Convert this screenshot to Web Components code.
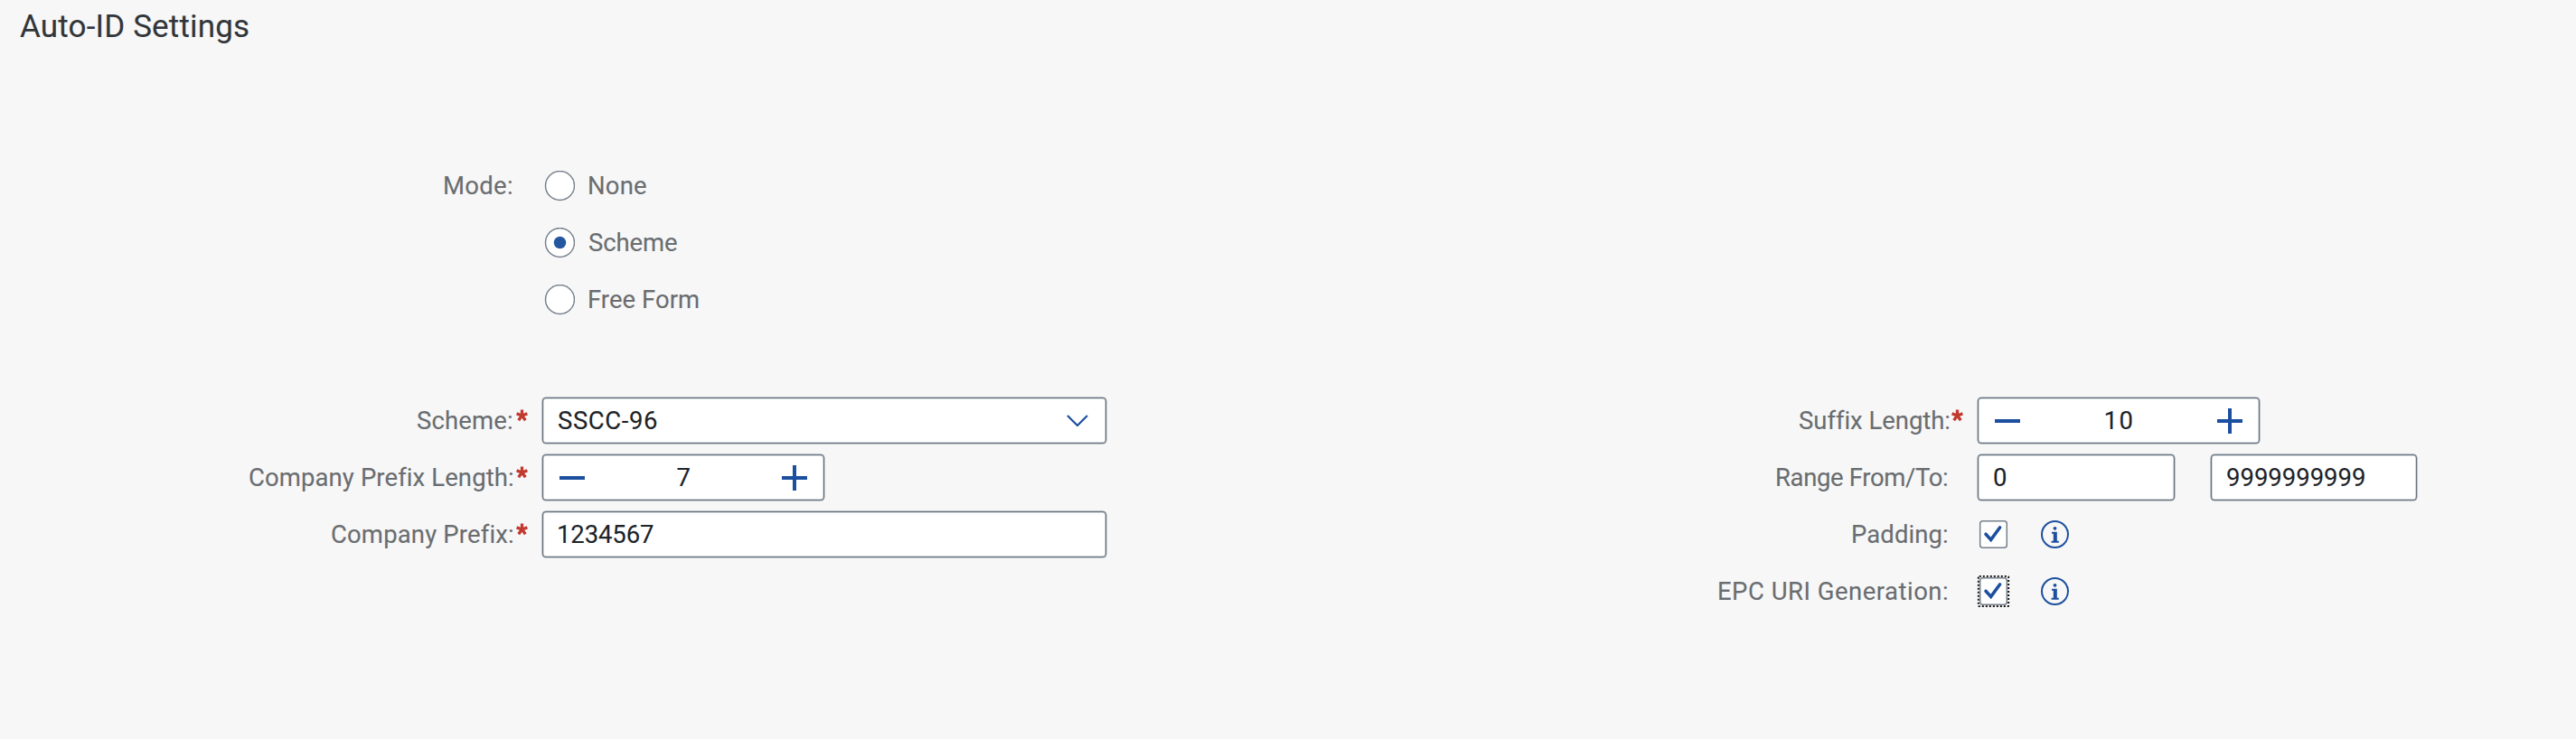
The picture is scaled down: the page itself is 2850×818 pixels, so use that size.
<!DOCTYPE html>
<html lang="en">
<head>
<meta charset="utf-8">
<title>Auto-ID Settings</title>
<style>
html,body{margin:0;height:100%;background:#f7f7f7;overflow:hidden}
body{font:27px/36px Roboto,"Liberation Sans",sans-serif;color:#6a6d70}
</style>
</head>
<body>
<autoid-settings></autoid-settings>
<script>
const ctx = document.createElement('canvas').getContext('2d');

/* Text run whose box is exactly its ink width, tracked to the given measure. */
class FitText extends HTMLElement {
  connectedCallback() {
    const root = this.attachShadow({mode: 'open'});
    const t = this.textContent, size = this.getAttribute('size') || 27.5, w = +this.getAttribute('w');
    ctx.font = size + 'px Roboto, "Liberation Sans", sans-serif';
    const m = ctx.measureText(t);
    const ink = m.actualBoundingBoxLeft + m.actualBoundingBoxRight;
    const ls = t.length > 1 ? (w - ink) / (t.length - 1) : 0;
    root.innerHTML = `<style>:host{display:block;flex:none;white-space:nowrap;width:${w}px;font-size:${size}px;letter-spacing:${ls}px;text-indent:${m.actualBoundingBoxLeft}px;-webkit-text-stroke:.1px currentColor}</style><slot></slot>`;
  }
}
customElements.define('fit-text', FitText);

function define(name, html) {
  customElements.define(name, class extends HTMLElement {
    connectedCallback() {
      if (this.shadowRoot) return;
      const t = document.createElement('template');
      t.innerHTML = html;
      this.attachShadow({mode: 'open'}).append(t.content.cloneNode(true));
    }
  });
}

define('form-row', `<style>
:host{display:grid;grid-template-columns:var(--label) 34px auto;height:63px;align-items:center;justify-content:start}
.label{display:flex;justify-content:flex-end}
.star{display:block;width:13px;height:14px;margin:-12px 0 0 5px;visibility:hidden}
:host([required]) .star{visibility:visible}
.field{display:flex;align-items:center}
</style>
<div class="label"><slot name="label"></slot></div>
<svg class="star" viewBox="0 0 13 14"><path d="M6.5 7V.5M6.5 7L.6 4.9M6.5 7l5.9-2.1M6.5 7l-3.8 5.3M6.5 7l3.8 5.3" stroke="#c1392f" stroke-width="3.3" fill="none"/></svg>
<div class="field"><slot></slot></div>`);

define('text-box', `<style>
:host{display:flex;flex:none;align-items:center;box-sizing:border-box;height:51px;border:1px solid #68737f;border-radius:4px;box-shadow:0 0 0 .5px #8a939d,inset 0 0 0 .5px #a8afb7;background:#fff;color:#1d2329;padding:0 17px;justify-content:space-between;width:var(--w,624px)}
</style><slot></slot>`);

define('radio-option', `<style>
:host{display:flex;align-items:center;gap:16px;padding-left:2px}
svg{display:block;width:34px;height:34px}
.dot{display:none}:host([checked]) .dot{display:block}
</style>
<svg viewBox="0 0 34 34"><circle cx="17.5" cy="16.5" r="16" fill="#fff" stroke="#77808b" stroke-width="1.5"/><circle class="dot" cx="17.5" cy="16.5" r="6.8" fill="#2457a0"/></svg><slot></slot>`);

define('step-input', `<style>
:host{display:block}
text-box{--w:312px}
svg{width:28px;height:28px;display:block}
path{stroke:#1c4f9f;stroke-width:4;fill:none}
</style>
<text-box><svg viewBox="0 0 28 28" style="margin-left:1px"><path d="M0 14h28"/></svg><slot></slot><svg viewBox="0 0 28 28" style="margin-right:1px"><path d="M0 14h28M14 0v28"/></svg></text-box>`);

define('check-box', `<style>
:host{display:block;margin-left:2px}
svg{display:block;width:31px;height:31px;overflow:visible}
.focus{display:none}:host([focused]) .focus{display:block}
</style>
<svg viewBox="0 0 31 31"><rect class="focus" x="-1.2" y="-1.2" width="33.4" height="33.4" rx="1" fill="none" stroke="#000" stroke-width="1.8" stroke-dasharray="2 2"/><rect x=".7" y=".7" width="29.6" height="29.6" rx="3" fill="#fff" stroke="#77808b" stroke-width="1.5"/><path d="M7 15.2l5.7 6.2L22.7 7.8" fill="none" stroke="#1c4f9f" stroke-width="3.5" stroke-linecap="round"/></svg>`);

define('info-icon', `<style>
:host{display:block;margin-left:37px}svg{display:block;width:31px;height:31px}
</style>
<svg viewBox="0 0 31 31"><circle cx="15.5" cy="15.5" r="14.5" fill="none" stroke="#1c4f9f" stroke-width="2"/><circle cx="15.5" cy="8.8" r="1.9" fill="#1c4f9f"/><path d="M12 12.8h5.8v10h2v1.9h-8.2v-1.9h2.2v-8.1H12z" fill="#1c4f9f"/></svg>`);

define('autoid-settings', `<style>
:host{display:block;height:818px;box-sizing:border-box;padding-top:12px}
header{padding-left:22px;color:#32363a;line-height:36px;height:36px}
.mode{--label:566px;padding-top:126px}
.cols{display:grid;grid-template-columns:1588px 1fr;padding-top:71px}
.left{--label:566px}.right{--label:566px}
.chev{width:24px;height:13px;margin:0 2px 0 auto}
</style>
<header><fit-text size="35" w="253">Auto-ID Settings</fit-text></header>
<section class="mode">
<form-row><fit-text slot="label" w="74">Mode:</fit-text><radio-option><fit-text w="63">None</fit-text></radio-option></form-row>
<form-row><radio-option checked><fit-text w="97">Scheme</fit-text></radio-option></form-row>
<form-row><radio-option><fit-text w="121">Free Form</fit-text></radio-option></form-row>
</section>
<div class="cols">
<section class="left">
<form-row required><fit-text slot="label" w="104">Scheme:</fit-text><text-box><fit-text w="109">SSCC-96</fit-text><svg class="chev" viewBox="0 0 24 13"><path d="M1 1l11 11L23 1" fill="none" stroke="#1c4f9f" stroke-width="2.2"/></svg></text-box></form-row>
<form-row required><fit-text slot="label" w="290">Company Prefix Length:</fit-text><step-input><fit-text w="13">7</fit-text></step-input></form-row>
<form-row required><fit-text slot="label" w="199">Company Prefix:</fit-text><text-box><fit-text w="105">1234567</fit-text></text-box></form-row>
</section>
<section class="right">
<form-row required><fit-text slot="label" w="163">Suffix Length:</fit-text><step-input><fit-text w="29">10</fit-text></step-input></form-row>
<form-row><fit-text slot="label" w="188">Range From/To:</fit-text><text-box style="--w:218px"><fit-text w="14">0</fit-text></text-box><text-box style="--w:228px;margin-left:40px"><fit-text w="152">9999999999</fit-text></text-box></form-row>
<form-row><fit-text slot="label" w="104">Padding:</fit-text><check-box></check-box><info-icon></info-icon></form-row>
<form-row><fit-text slot="label" w="252">EPC URI Generation:</fit-text><check-box focused></check-box><info-icon></info-icon></form-row>
</section>
</div>`);
</script>
</body>
</html>
